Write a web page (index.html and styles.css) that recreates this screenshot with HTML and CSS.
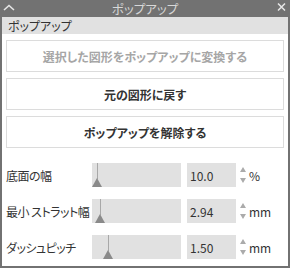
FILE: index.html
```html
<!DOCTYPE html>
<html>
<head>
  <title>ポップアップ</title>
  <link rel="stylesheet" href="styles.css">
</head>
<body>
  <div class="panel">
    <div class="titlebar">
      <svg class="chev" width="12" height="7" viewBox="0 0 12 7"><path d="M1 6 L6 1.5 L11 6" fill="none" stroke="#e6e6e6" stroke-width="1.6"/></svg>
      <span class="title">ポップアップ</span>
      <svg class="close" width="9" height="8" viewBox="0 0 9 8"><path d="M1 0.5 L8 7.5 M8 0.5 L1 7.5" fill="none" stroke="#e6e6e6" stroke-width="1.5"/></svg>
    </div>

    <div class="content">
      <div class="section">ポップアップ</div>

      <div class="buttons">
        <div class="btn disabled">選択した図形をポップアップに変換する</div>
        <div class="btn">元の図形に戻す</div>
        <div class="btn">ポップアップを解除する</div>
      </div>

      <div class="rows">
        <div class="row">
          <span class="label">底面の幅</span>
          <div class="slider"><span class="thumb" style="left: 5px"></span></div>
          <div class="field">10.0</div>
          <div class="spin"><i class="up"></i><i class="down"></i></div>
          <span class="unit">%</span>
        </div>
        <div class="row">
          <span class="label">最小 ストラット幅</span>
          <div class="slider"><span class="thumb" style="left: 8px"></span></div>
          <div class="field">2.94</div>
          <div class="spin"><i class="up"></i><i class="down"></i></div>
          <span class="unit">mm</span>
        </div>
        <div class="row">
          <span class="label">ダッシュピッチ</span>
          <div class="slider"><span class="thumb" style="left: 16px"></span></div>
          <div class="field">1.50</div>
          <div class="spin"><i class="up"></i><i class="down"></i></div>
          <span class="unit">mm</span>
        </div>
      </div>
    </div>
  </div>
</body>
</html>
```

FILE: styles.css
```css
html,
body {
  margin: 0;
  padding: 0;
}

body {
  font: 12px/1 "Noto Sans CJK JP", "DejaVu Sans", sans-serif;
  font-feature-settings: "palt";
  color: #333;
}

.panel {
  width: 290px;
  height: 268px;
  box-sizing: border-box;
  background-color: #727272;
  padding: 0 2px 2px;
  display: flex;
  flex-direction: column;
}

.titlebar {
  height: 17px;
  flex: none;
  display: flex;
  align-items: center;
  justify-content: space-between;
  position: relative;
}

.titlebar .chev {
  margin: -3px 0 0 1px;
}

.titlebar .close {
  margin: -3px 2px 0 0;
}

.title {
  position: absolute;
  left: 0;
  right: 0;
  top: 0;
  text-align: center;
  color: #d8d8d8;
  font-size: 12.5px;
  line-height: 17px;
}

.content {
  flex: 1;
  background-color: #fff;
}

.section {
  height: 17px;
  background-color: #e1e1e1;
  padding-left: 6px;
  line-height: 17px;
  font-size: 12px;
  color: #333;
}

.buttons {
  display: flex;
  flex-direction: column;
  gap: 6px;
  padding: 6px 4px 0;
}

.btn {
  height: 32px;
  box-sizing: border-box;
  border: 1px solid #dcdcdc;
  display: flex;
  align-items: center;
  justify-content: center;
  font-weight: bold;
  color: #333;
  padding-top: 1px;
}

.btn.disabled {
  color: #a6a6a6;
}

.rows {
  display: flex;
  flex-direction: column;
  gap: 12px;
  padding: 15px 4px 0;
}

.row {
  display: grid;
  grid-template-columns: 86px 89px 55px 8px auto;
  height: 24px;
  align-items: center;
}

.label {
  font-size: 12px;
  letter-spacing: -0.5px;
  color: #333;
  white-space: nowrap;
  padding-top: 1px;
}

.slider {
  height: 24px;
  background-color: #e1e1e1;
  position: relative;
  overflow: hidden;
}

.thumb {
  position: absolute;
  top: 0;
  bottom: 0;
  width: 11px;
  margin-left: -5px;
}

.thumb::before {
  content: "";
  position: absolute;
  left: 5px;
  top: 0;
  height: 16px;
  width: 1px;
  background-color: #a8a8a8;
}

.thumb::after {
  content: "";
  position: absolute;
  left: 0;
  bottom: 0;
  border-left: 5.5px solid transparent;
  border-right: 5.5px solid transparent;
  border-bottom: 9px solid #8a8a8a;
}

.field {
  height: 24px;
  margin-left: 6px;
  background-color: #e1e1e1;
  box-sizing: border-box;
  padding: 7px 0 0 3px;
  font-size: 12px;
  color: #333;
}

.spin {
  margin-left: 3px;
  width: 8px;
  height: 24px;
  display: flex;
  flex-direction: column;
  justify-content: center;
  align-items: center;
  gap: 6px;
}

.spin i {
  display: block;
  width: 0;
  height: 0;
  border-left: 3.5px solid transparent;
  border-right: 3.5px solid transparent;
}

.spin .up {
  border-bottom: 5px solid #ababab;
}

.spin .down {
  border-top: 5px solid #ababab;
}

.unit {
  margin-left: 5px;
  font-size: 12px;
  color: #333;
  padding-top: 1px;
}
```
